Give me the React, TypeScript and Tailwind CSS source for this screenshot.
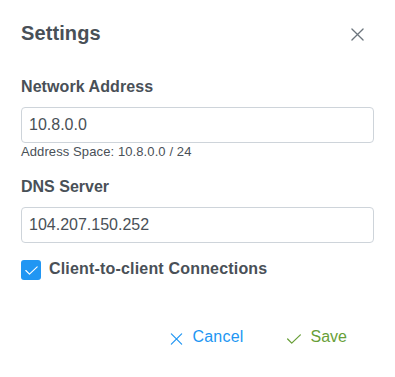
import { useState } from "react";

function CrossIcon({ className }: { className?: string }) {
  return (
    <svg viewBox="0 0 14 14" className={className} fill="none" stroke="currentColor" strokeWidth="1.4" strokeLinecap="round">
      <path d="M1 1L13 13M13 1L1 13" />
    </svg>
  );
}

function CheckIcon({ className }: { className?: string }) {
  return (
    <svg viewBox="0 0 16 11" className={className} fill="none" stroke="currentColor" strokeWidth="1.4" strokeLinecap="round" strokeLinejoin="round">
      <path d="M1 5.5L5.5 10L15 1" />
    </svg>
  );
}

export default function App() {
  const [network, setNetwork] = useState("10.8.0.0");
  const [dns, setDns] = useState("104.207.150.252");
  const [c2c, setC2c] = useState(true);

  return (
    <div className="h-[377px] w-[395px] bg-white font-['Liberation_Sans',Arial,sans-serif] text-[#495057]">
      <div className="flex items-center justify-between pl-[21px] pr-[31px] pt-[21px]">
        <h1 className="text-[20px] font-bold leading-[24px] tracking-[0.1px]">Settings</h1>
        <button type="button" className="mt-[3px] text-[#6c757d]">
          <CrossIcon className="h-[13px] w-[13px]" />
        </button>
      </div>

      <div className="px-[21px] pt-[30px]">
        <label className="block">
          <span className="block text-base font-bold leading-6 tracking-[0.08px]">Network Address</span>
          <input
            type="text"
            value={network}
            onChange={(e) => setNetwork(e.target.value)}
            className="mt-2 block h-[36px] w-full rounded-[4px] border border-[#ced4da] pl-[7px] text-base text-[#495057] outline-none"
          />
        </label>
        <p className="text-[13px] leading-[18px] tracking-[0.1px]">Address Space: 10.8.0.0 / 24</p>

        <label className="mt-[14px] block">
          <span className="block text-base font-bold leading-6">DNS Server</span>
          <input
            type="text"
            value={dns}
            onChange={(e) => setDns(e.target.value)}
            className="mt-2 block h-[36px] w-full rounded-[4px] border border-[#ced4da] pl-[7px] text-base text-[#495057] outline-none"
          />
        </label>

        <label className="mt-4 flex items-center gap-2">
          <button
            type="button"
            onClick={() => setC2c(!c2c)}
            className={`flex h-5 w-5 items-center justify-center rounded-[3px] ${c2c ? "bg-[#2196f3]" : "border-2 border-[#ced4da] bg-white"}`}
          >
            {c2c && <CheckIcon className="h-[9px] w-[13px] text-white" />}
          </button>
          <span className="-mt-[2px] text-base font-bold leading-6 tracking-[0.18px]">Client-to-client Connections</span>
        </label>
      </div>

      <div className="mt-[44px] flex justify-end gap-[42px] pr-[48px]">
        <button type="button" className="flex items-center gap-[10px] text-base leading-6 tracking-[0.2px] text-[#2196f3]">
          <CrossIcon className="mt-[3px] h-[12px] w-[13px]" />
          Cancel
        </button>
        <button type="button" className="flex items-center gap-[9px] text-base leading-6 text-[#689f38]">
          <CheckIcon className="mt-[4px] h-[10px] w-[16px]" />
          Save
        </button>
      </div>
    </div>
  );
}
